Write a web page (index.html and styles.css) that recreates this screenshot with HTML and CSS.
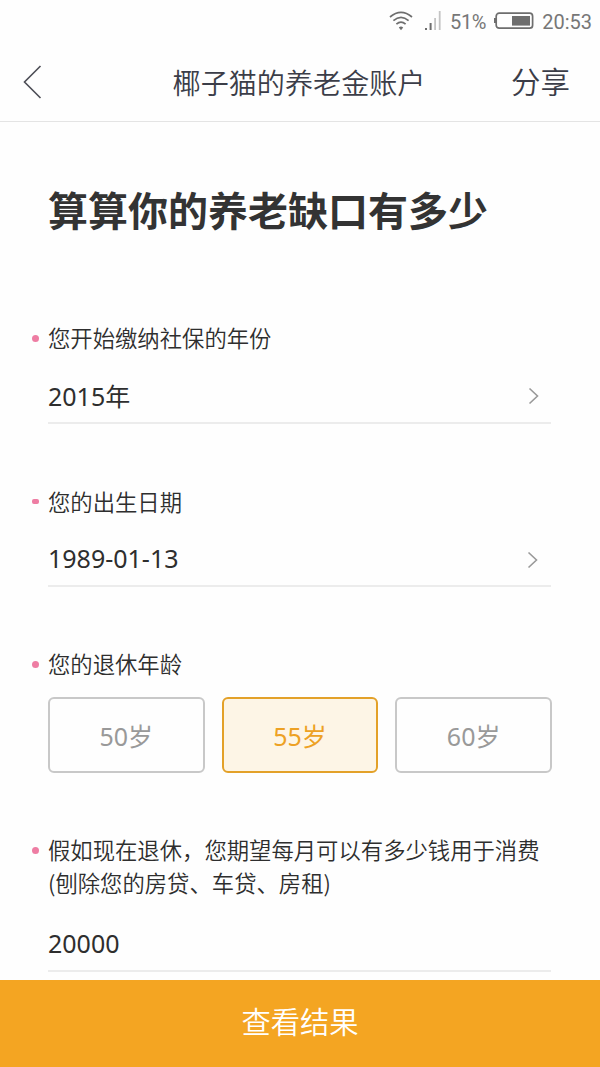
FILE: index.html
```html
<!DOCTYPE html>
<html lang="zh-CN">
<head>
  <meta charset="UTF-8" />
  <meta name="viewport" content="width=device-width, initial-scale=1.0"/>
  <title>椰子猫的养老金账户</title>
  <link rel="stylesheet" href="styles.css">
</head>
<body>

  <div class="status-bar">
    <svg class="wifi" width="24" height="20" viewBox="0 0 24 20">
      <path d="M1 6 Q12 -3.4 23 6 M4.4 9.6 Q12 3 19.6 9.6 M7.4 13.2 Q12 9 16.6 13.2" />
      <path class="fill" d="M9.8 16.4 Q12 14.8 14.2 16.4 L12 19.2 Z" />
    </svg>
    <svg class="signal" width="16" height="20" viewBox="0 0 16 20">
      <rect x="0" y="17" width="2" height="2" />
      <rect x="4.6" y="12" width="2" height="7" />
      <rect class="off" x="9.2" y="7" width="1.8" height="12" />
      <rect class="off" x="13.8" y="0" width="1.8" height="19" />
    </svg>
    <span class="percent">51%</span>
    <svg class="battery" width="40" height="18" viewBox="0 0 40 18">
      <rect x="0" y="6" width="2" height="5" />
      <rect class="case" x="2.2" y="1.2" width="36.4" height="15" rx="3" />
      <rect x="18" y="4" width="18" height="9.6" />
    </svg>
    <span class="time">20:53</span>
  </div>

  <header>
    <a class="back" href="#">
      <svg width="20" height="34" viewBox="0 0 20 34">
        <path d="M17.5 1 L1.5 17 L17.5 33" />
      </svg>
    </a>
    <span class="title">椰子猫的养老金账户</span>
    <a class="share" href="#">分享</a>
  </header>

  <main>
    <h1>算算你的养老缺口有多少</h1>

    <section class="field">
      <div class="label">您开始缴纳社保的年份</div>
      <div class="value">
        <span>2015年</span>
        <svg class="arrow" width="12" height="18" viewBox="0 0 12 18">
          <path d="M1.5 1.5 L9.5 9 L1.5 16.5" />
        </svg>
      </div>
    </section>

    <section class="field birthday">
      <div class="label">您的出生日期</div>
      <div class="value">
        <span>1989-01-13</span>
        <svg class="arrow" width="12" height="18" viewBox="0 0 12 18">
          <path d="M1.5 1.5 L9.5 9 L1.5 16.5" />
        </svg>
      </div>
    </section>

    <section class="field age">
      <div class="label">您的退休年龄</div>
      <div class="options">
        <button>50岁</button>
        <button class="active">55岁</button>
        <button>60岁</button>
      </div>
    </section>

    <section class="field money">
      <div class="label">假如现在退休，您期望每月可以有多少钱用于消费<br>(刨除您的房贷、车贷、房租)</div>
      <div class="value">
        <span>20000</span>
      </div>
    </section>
  </main>

  <button class="submit">查看结果</button>

</body>
</html>
```
FILE: styles.css
```css
* {
  box-sizing: border-box;
}

body {
  margin: 0;
  height: 1067px;
  display: flex;
  flex-direction: column;
  overflow: hidden;
  font-family: "Noto Sans", "Noto Sans CJK SC", sans-serif;
  background: #fefefe;
  color: #2e2e2e;
}

/* status bar */
.status-bar {
  display: flex;
  align-items: center;
  justify-content: flex-end;
  height: 42px;
  padding: 1px 8px 0 0;
  font-family: Roboto, sans-serif;
  font-size: 20px;
  color: #777;
}

.status-bar svg {
  fill: #6e6e6e;
}

.status-bar .off {
  fill: #c4c4c4;
}

.wifi {
  margin: 0 12px 2px 0;
}

.wifi path {
  fill: none;
  stroke: #6e6e6e;
  stroke-width: 1.7;
}

.wifi .fill {
  fill: #6e6e6e;
  stroke: none;
}

.signal {
  margin: 0 9px 2px 0;
}

.percent {
  letter-spacing: -0.3px;
}

.battery {
  margin: 0 8px 1px 8px;
}

.battery .case {
  fill: none;
  stroke: #6e6e6e;
  stroke-width: 1.7;
}

/* header */
header {
  display: grid;
  grid-template-columns: 1fr auto 1fr;
  align-items: center;
  height: 80px;
  padding: 0 30px 0 23px;
  border-bottom: 1px solid #e4e4e4;
  font-family: "Noto Sans CJK SC", sans-serif;
  font-weight: 350;
  color: #3b3d48;
}

header a {
  color: inherit;
  text-decoration: none;
}

.back svg {
  display: block;
  fill: none;
  stroke: #4c4d55;
  stroke-width: 1.6;
}

.title {
  padding-left: 5px;
  font-size: 28.1px;
}

.share {
  padding-bottom: 3px;
  font-size: 29.5px;
  text-align: right;
}

/* form */
main {
  flex: 1;
  min-height: 0;
  padding: 57px 49px 0 48px;
}

h1 {
  margin: 0 0 82px;
  font-family: "Noto Sans CJK SC", sans-serif;
  font-size: 40px;
  line-height: 60px;
  color: #333;
}

.field {
  margin-bottom: 61px;
}

.label {
  position: relative;
  font-family: "Noto Sans CJK SC", sans-serif;
  font-size: 22.35px;
  font-weight: 350;
  line-height: 33px;
  white-space: nowrap;
}

.label::before {
  content: "";
  position: absolute;
  left: -16px;
  top: 14px;
  width: 7px;
  height: 7px;
  border-radius: 50%;
  background: #ee7da3;
}

.birthday .label::before {
  height: 5px;
  border-radius: 2px;
}

.value {
  display: flex;
  align-items: center;
  justify-content: space-between;
  height: 54px;
  margin-top: 16px;
  padding: 0 11px 3px 0;
  border-bottom: 2px solid #ececec;
  font-size: 25px;
}

.arrow {
  margin-top: 3px;
  fill: none;
  stroke: #999;
  stroke-width: 1.6;
}

.birthday .value {
  height: 53px;
  padding-right: 12px;
}

.options {
  display: grid;
  grid-template-columns: repeat(3, 1fr);
  gap: 17px;
  margin: 17px -1px 0 0;
}

.options button {
  height: 76px;
  padding: 0;
  border: 2px solid #c8c8c8;
  border-radius: 6px;
  background: none;
  font-family: inherit;
  font-size: 25px;
  color: #999;
}

.options .active {
  border-color: #e3a129;
  background: #fdf5e6;
  color: #eda124;
}

.birthday,
.age {
  margin-bottom: 60px;
}

.money .value {
  margin-top: 19px;
}

/* bottom button */
.submit {
  height: 87px;
  padding: 0 0 8px;
  border: none;
  background: #f4a522;
  font-family: "Noto Sans CJK SC", sans-serif;
  font-size: 29.3px;
  font-weight: 350;
  color: #fff;
}
```
